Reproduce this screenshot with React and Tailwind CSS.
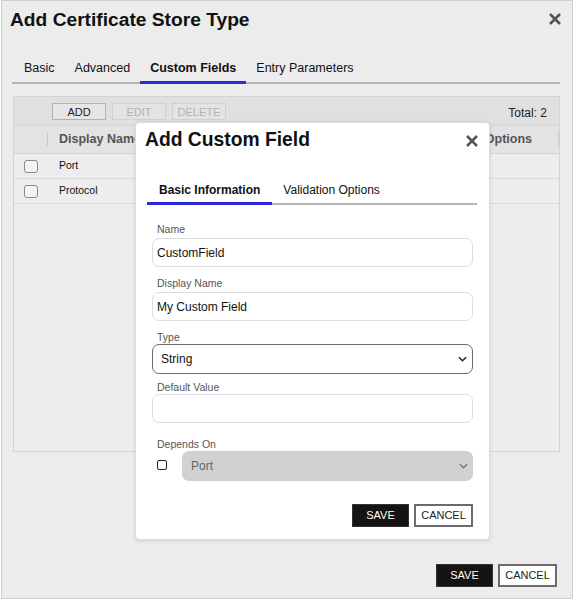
import React from 'react';

function CloseIcon({ className }) {
  return (
    <svg viewBox="0 0 12 12" className={className} fill="none" stroke="currentColor" strokeWidth="2.6" strokeLinecap="butt">
      <path d="M1 1l10 10M11 1L1 11" />
    </svg>
  );
}

function Chevron({ className }) {
  return (
    <svg viewBox="0 0 10 6" className={className} fill="none" stroke="currentColor" strokeWidth="1.6">
      <path d="M1 1l4 4 4-4" />
    </svg>
  );
}

function Field({ label, value, className = '' }) {
  return (
    <div className={className}>
      <div className="h-[14px] pl-[5px] text-[10.5px] leading-[14px] text-[#555]">{label}</div>
      <div className="mt-[2px] flex h-[29px] items-center rounded-[7px] border border-[#dedede] bg-white pl-[4px] text-[12px] text-[#111]">
        {value}
      </div>
    </div>
  );
}

const rows = ['Port', 'Protocol'];

export default function App() {
  return (
    <div className="relative h-[601px] w-[574px] overflow-hidden bg-white font-['Liberation_Sans',Arial,sans-serif] text-[#111]">
      <div className="ml-[1px] flex h-[599px] w-[572px] flex-col border border-[#cfcfcf] bg-[#ececec]">
        <div className="flex items-start justify-between pl-[8px] pr-[11px] pt-[7px]">
          <h2 className="text-[19.2px] font-bold leading-[24px]">Add Certificate Store Type</h2>
          <CloseIcon className="mt-[5px] h-[12px] w-[12px] text-[#555]" />
        </div>

        <div className="ml-[10px] mt-[24px] flex w-[548px] border-b-2 border-[#b4b4b4] pl-[2px] text-[12.5px]">
          <div className="-mb-[2px] flex h-[28px] items-center px-[10px] pb-[3px]">Basic</div>
          <div className="-mb-[2px] flex h-[28px] items-center px-[10px] pb-[3px]">Advanced</div>
          <div className="-mb-[2px] flex h-[28px] items-center border-b-[3px] border-[#2b2bd9] px-[10px] font-bold">Custom Fields</div>
          <div className="-mb-[2px] flex h-[28px] items-center px-[10px] pb-[3px]">Entry Parameters</div>
        </div>

        <div className="ml-[11px] mt-[12px] flex h-[356px] w-[547px] flex-col border border-[#d3d3d3] bg-[#ededed]">
          <div className="flex h-[28px] items-center bg-[#e0e0e0] pl-[38px] pr-[12px]">
            <div className="flex gap-[6px] text-[11px]">
              <button className="h-[17px] w-[54px] border border-[#b3b3b3] bg-[#e6e6e6] text-[#222]">ADD</button>
              <button className="h-[17px] w-[54px] border border-[#d0d0d0] bg-[#e3e3e3] text-[#b2b2b2]">EDIT</button>
              <button className="h-[17px] w-[54px] border border-[#d0d0d0] bg-[#e3e3e3] text-[#b2b2b2]">DELETE</button>
            </div>
            <span className="ml-auto mt-[4px] text-[12px] text-[#222]">Total: 2</span>
          </div>
          <div className="flex h-[29px] items-center border-y border-[#d6d6d6] bg-[#e3e3e3] text-[12.5px] font-bold text-[#555]">
            <div className="w-[33px]" />
            <div className="h-[13px] w-px bg-[#c9c9c9]" />
            <div className="pl-[11px]">Display Name</div>
            <div className="ml-auto pr-[26px]">Options</div>
            <div className="h-[13px] w-px bg-[#c9c9c9]" />
          </div>
          {rows.map((r) => (
            <div key={r} className="flex h-[25px] items-center border-b border-[#dadada] text-[10.5px]">
              <div className="flex w-[33px] justify-center">
                <span className="h-[13px] w-[14px] rounded-[3px] border border-[#8a8a8a] bg-[#f4f4f4]" />
              </div>
              <div className="pl-[12px]">{r}</div>
            </div>
          ))}
        </div>

        <div className="mt-[112px] flex justify-end gap-[5px] pr-[15px] text-[11px]">
          <button className="h-[23px] w-[57px] border border-[#333] bg-[#141414] text-white">SAVE</button>
          <button className="h-[23px] w-[59px] border-2 border-[#6b6b6b] bg-white text-[#222]">CANCEL</button>
        </div>
      </div>

      <div className="absolute left-[135px] top-[122px] w-[355px] rounded-[4px] border border-[#dcdcdc] bg-white pb-[12px] shadow-[0_1px_4px_rgba(0,0,0,0.12)]">
        <div className="flex items-start justify-between pl-[9px] pr-[11px] pt-[5px]">
          <h3 className="text-[19.3px] font-bold leading-[24px]">Add Custom Field</h3>
          <CloseIcon className="mt-[7px] h-[12px] w-[12px] text-[#555]" />
        </div>

        <div className="ml-[11px] mt-[25px] flex w-[330px] border-b-2 border-[#b4b4b4] text-[12px]">
          <div className="-mb-[2px] flex h-[28px] items-center border-b-[3px] border-[#2b2bd9] px-[12px] font-bold">Basic Information</div>
          <div className="-mb-[2px] flex h-[28px] items-center px-[11px] pb-[3px]">Validation Options</div>
        </div>

        <div className="mx-[16px]">
          <Field className="mt-[17px]" label="Name" value="CustomField" />
          <Field className="mt-[9px]" label="Display Name" value="My Custom Field" />

          <div className="mt-[9px] h-[14px] pl-[5px] text-[10.5px] leading-[14px] text-[#555]">Type</div>
          <div className="flex h-[30px] items-center justify-between rounded-[7px] border border-[#6a6a6a] bg-white pl-[8px] pr-[5px] text-[12px]">
            <span>String</span>
            <Chevron className="h-[6px] w-[9px] text-[#222]" />
          </div>

          <div className="mt-[6px] h-[14px] pl-[5px] text-[10.5px] leading-[14px] text-[#555]">Default Value</div>
          <div className="h-[29px] rounded-[7px] border border-[#dedede] bg-white" />

          <div className="mt-[14px] h-[14px] pl-[5px] text-[10.5px] leading-[14px] text-[#555]">Depends On</div>
          <div className="flex items-start">
            <span className="ml-[5px] mt-[9px] h-[10px] w-[10px] rounded-[2px] border-[1.5px] border-[#222] bg-white" />
            <div className="ml-[15px] flex h-[30px] flex-1 items-center justify-between rounded-[7px] bg-[#d1d1d3] pl-[9px] pr-[5px] text-[12px] text-[#666]">
              <span>Port</span>
              <Chevron className="h-[6px] w-[9px] text-[#777]" />
            </div>
          </div>

          <div className="mt-[23px] flex justify-end gap-[5px] text-[11px]">
            <button className="h-[23px] w-[57px] border border-[#333] bg-[#141414] text-white">SAVE</button>
            <button className="h-[23px] w-[59px] border-2 border-[#6b6b6b] bg-white text-[#222]">CANCEL</button>
          </div>
        </div>
      </div>
    </div>
  );
}
